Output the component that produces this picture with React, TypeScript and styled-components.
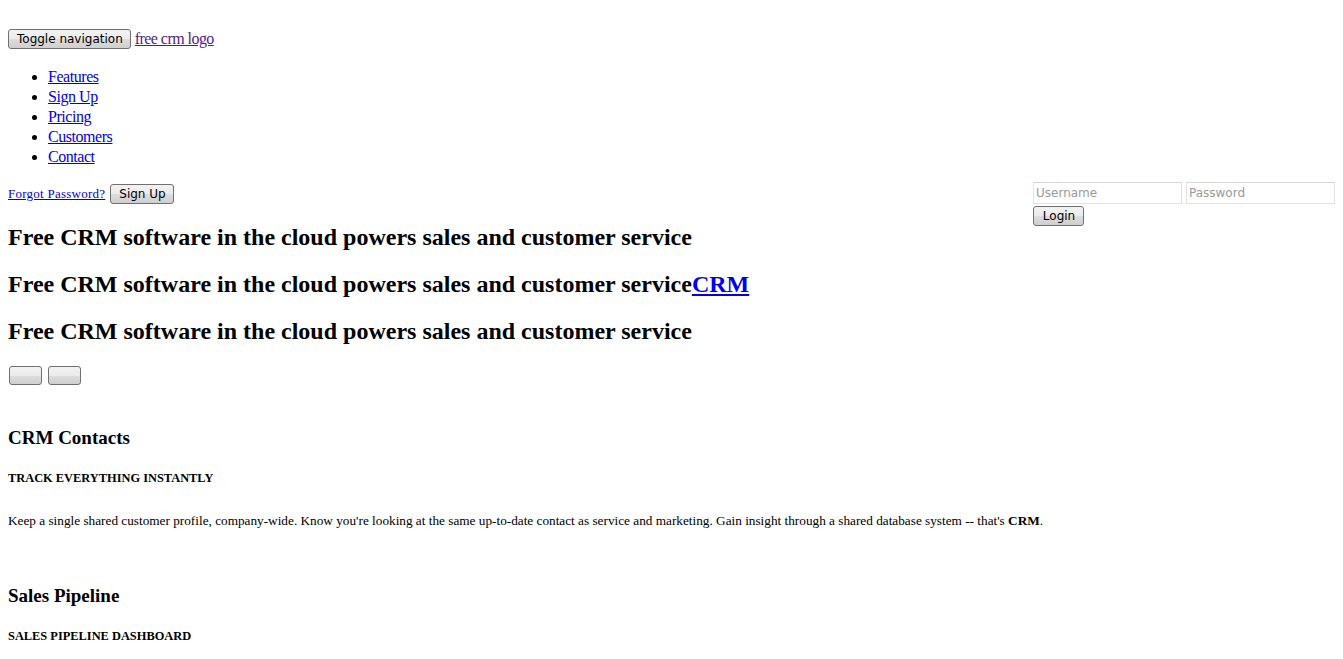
import React from "react";
import styled, { createGlobalStyle } from "styled-components";

const Global = createGlobalStyle`
  html, body { background: #fff; }
  body {
    margin: 8px;
    font-family: "Liberation Serif", "Times New Roman", serif;
    font-size: 16px;
    color: #000;
  }
`;

const Page = styled.div`
  display: block;
`;

const TopBar = styled.div`
  display: flex;
  align-items: center;
  gap: 4px;
  margin-top: 21px;
  height: 20px;
`;

const NativeButton = styled.button<{ $w?: number; $h?: number }>`
  font-family: "DejaVu Sans", Tahoma, sans-serif;
  font-size: 12px;
  color: #000;
  height: ${(p) => p.$h ?? 20}px;
  ${(p) => (p.$w ? `width: ${p.$w}px;` : "")}
  padding: 0 7px 0 8px;
  border: 1px solid #707070;
  border-radius: 3px;
  background: linear-gradient(#f2f2f2 0%, #ebebeb 50%, #dddddd 51%, #cfcfcf 100%);
  line-height: 1;
  cursor: pointer;
  box-sizing: border-box;
`;

const LogoLink = styled.a`
  color: #551a8b;
  text-decoration: underline;
  font-size: 16px;
  letter-spacing: -0.55px;
`;

const NavList = styled.ul`
  margin: 18px 0 0;
  padding-left: 40px;
  list-style: disc;
`;

const NavItem = styled.li`
  line-height: 20px;
  font-size: 16px;
`;

const BlueLink = styled.a<{ $size?: number; $track?: number }>`
  color: #0000ee;
  text-decoration: underline;
  font-size: ${(p) => p.$size ?? 16}px;
  letter-spacing: ${(p) => p.$track ?? 0}px;
`;

const AccountRow = styled.div`
  margin-top: 15px;
  display: flex;
  justify-content: space-between;
  align-items: flex-start;
  height: 22px;
`;

const LeftActions = styled.div`
  display: flex;
  align-items: center;
  gap: 5px;
  height: 22px;
  padding-top: 2px;
  box-sizing: border-box;
`;

const LoginForm = styled.form`
  width: 302px;
  display: flex;
  flex-wrap: wrap;
  gap: 2px 4px;
  margin: 0;
`;

const TextInput = styled.input`
  width: 149px;
  height: 22px;
  box-sizing: border-box;
  border: 1px solid #e3e3e3;
  border-top-color: #d6d6d6;
  padding: 0 2px;
  font-family: "DejaVu Sans", Tahoma, sans-serif;
  font-size: 12px;
  color: #000;
  outline: none;
  &::placeholder {
    color: #9a9a9a;
  }
`;

const Headline = styled.h2`
  font-size: 24px;
  font-weight: bold;
  margin: 20px 0;
  line-height: 27px;
`;

const HeroButtons = styled.div`
  display: flex;
  gap: 6px;
  margin: 21px 0 0 1px;
`;

const Feature = styled.section<{ $top: number }>`
  margin-top: ${(p) => p.$top}px;
`;

const FeatureTitle = styled.h3`
  font-size: 19px;
  font-weight: bold;
  margin: 18px 0;
  line-height: 21px;
`;

const FeatureSub = styled.h5`
  font-size: 12.4px;
  font-weight: bold;
  margin: 23px 0 22px;
  line-height: 15px;
`;

const FeatureText = styled.p`
  font-size: 13.25px;
  margin: 27px 0 0;
  line-height: 15px;
`;

export default function App() {
  return (
    <Page>
      <Global />
      <TopBar>
        <NativeButton type="button">Toggle navigation</NativeButton>
        <LogoLink href="#">free crm logo</LogoLink>
      </TopBar>
      <NavList>
        {["Features", "Sign Up", "Pricing", "Customers", "Contact"].map((t) => (
          <NavItem key={t}>
            <BlueLink href="#" $track={-0.45}>{t}</BlueLink>
          </NavItem>
        ))}
      </NavList>
      <AccountRow>
        <LeftActions>
          <BlueLink href="#" $size={13} $track={0.25}>Forgot Password?</BlueLink>
          <NativeButton type="button">Sign Up</NativeButton>
        </LeftActions>
        <LoginForm onSubmit={(e) => e.preventDefault()}>
          <TextInput placeholder="Username" />
          <TextInput type="password" placeholder="Password" />
          <NativeButton type="submit" $w={51}>Login</NativeButton>
        </LoginForm>
      </AccountRow>
      <Headline>Free CRM software in the cloud powers sales and customer service</Headline>
      <Headline>
        Free CRM software in the cloud powers sales and customer service
        <BlueLink href="#" $size={24}>CRM</BlueLink>
      </Headline>
      <Headline>Free CRM software in the cloud powers sales and customer service</Headline>
      <HeroButtons>
        <NativeButton type="button" $w={33} $h={19} />
        <NativeButton type="button" $w={33} $h={19} />
      </HeroButtons>
      <Feature $top={42}>
        <FeatureTitle>CRM Contacts</FeatureTitle>
        <FeatureSub>TRACK EVERYTHING INSTANTLY</FeatureSub>
        <FeatureText>
          Keep a single shared customer profile, company-wide. Know you're looking at the same
          up-to-date contact as service and marketing. Gain insight through a shared database
          system -- that's <b>CRM</b>.
        </FeatureText>
      </Feature>
      <Feature $top={57}>
        <FeatureTitle>Sales Pipeline</FeatureTitle>
        <FeatureSub>SALES PIPELINE DASHBOARD</FeatureSub>
      </Feature>
    </Page>
  );
}
